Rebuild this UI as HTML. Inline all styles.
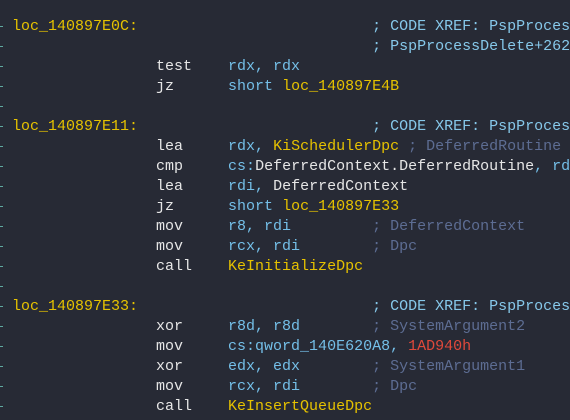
<!DOCTYPE html>
<html><head><meta charset="utf-8"><style>
html,body{margin:0;padding:0;background:#272a35;width:570px;height:420px;overflow:hidden}
pre{position:absolute;left:12px;top:17px;margin:0;font:15px/20px "Liberation Mono",monospace;color:#e6e6e6;white-space:pre}
.l{color:#e6c200}.o{color:#74bfe8}.c{color:#5d6d93}.x{color:#86c8ea}.r{color:#e0493b}.w{color:#e6e6e6}
.t{position:absolute;left:0;width:3px;height:1px;background:#5fa8a0}
</style></head><body>
<pre><span class="l">loc_140897E0C:</span>                          <span class="x">; CODE XREF: PspProces</span>
                                        <span class="x">; PspProcessDelete+262</span>
                test    <span class="o">rdx, rdx</span>
                jz      <span class="o">short </span><span class="l">loc_140897E4B</span>

<span class="l">loc_140897E11:</span>                          <span class="x">; CODE XREF: PspProces</span>
                lea     <span class="o">rdx, </span><span class="l">KiSchedulerDpc</span> <span class="c">; DeferredRoutine</span>
                cmp     <span class="o">cs:</span><span class="w">DeferredContext.DeferredRoutine</span><span class="o">, rdi</span>
                lea     <span class="o">rdi, </span><span class="w">DeferredContext</span>
                jz      <span class="o">short </span><span class="l">loc_140897E33</span>
                mov     <span class="o">r8, rdi</span>         <span class="c">; DeferredContext</span>
                mov     <span class="o">rcx, rdi</span>        <span class="c">; Dpc</span>
                call    <span class="l">KeInitializeDpc</span>

<span class="l">loc_140897E33:</span>                          <span class="x">; CODE XREF: PspProces</span>
                xor     <span class="o">r8d, r8d</span>        <span class="c">; SystemArgument2</span>
                mov     <span class="o">cs:qword_140E620A8, </span><span class="r">1AD940h</span>
                xor     <span class="o">edx, edx</span>        <span class="c">; SystemArgument1</span>
                mov     <span class="o">rcx, rdi</span>        <span class="c">; Dpc</span>
                call    <span class="l">KeInsertQueueDpc</span></pre>
<div class="t" style="top:26px"></div><div class="t" style="top:46px"></div><div class="t" style="top:66px"></div><div class="t" style="top:86px"></div><div class="t" style="top:106px"></div><div class="t" style="top:126px"></div><div class="t" style="top:146px"></div><div class="t" style="top:166px"></div><div class="t" style="top:186px"></div><div class="t" style="top:206px"></div><div class="t" style="top:226px"></div><div class="t" style="top:246px"></div><div class="t" style="top:266px"></div><div class="t" style="top:286px"></div><div class="t" style="top:306px"></div><div class="t" style="top:326px"></div><div class="t" style="top:346px"></div><div class="t" style="top:366px"></div><div class="t" style="top:386px"></div><div class="t" style="top:406px"></div>
</body></html>
